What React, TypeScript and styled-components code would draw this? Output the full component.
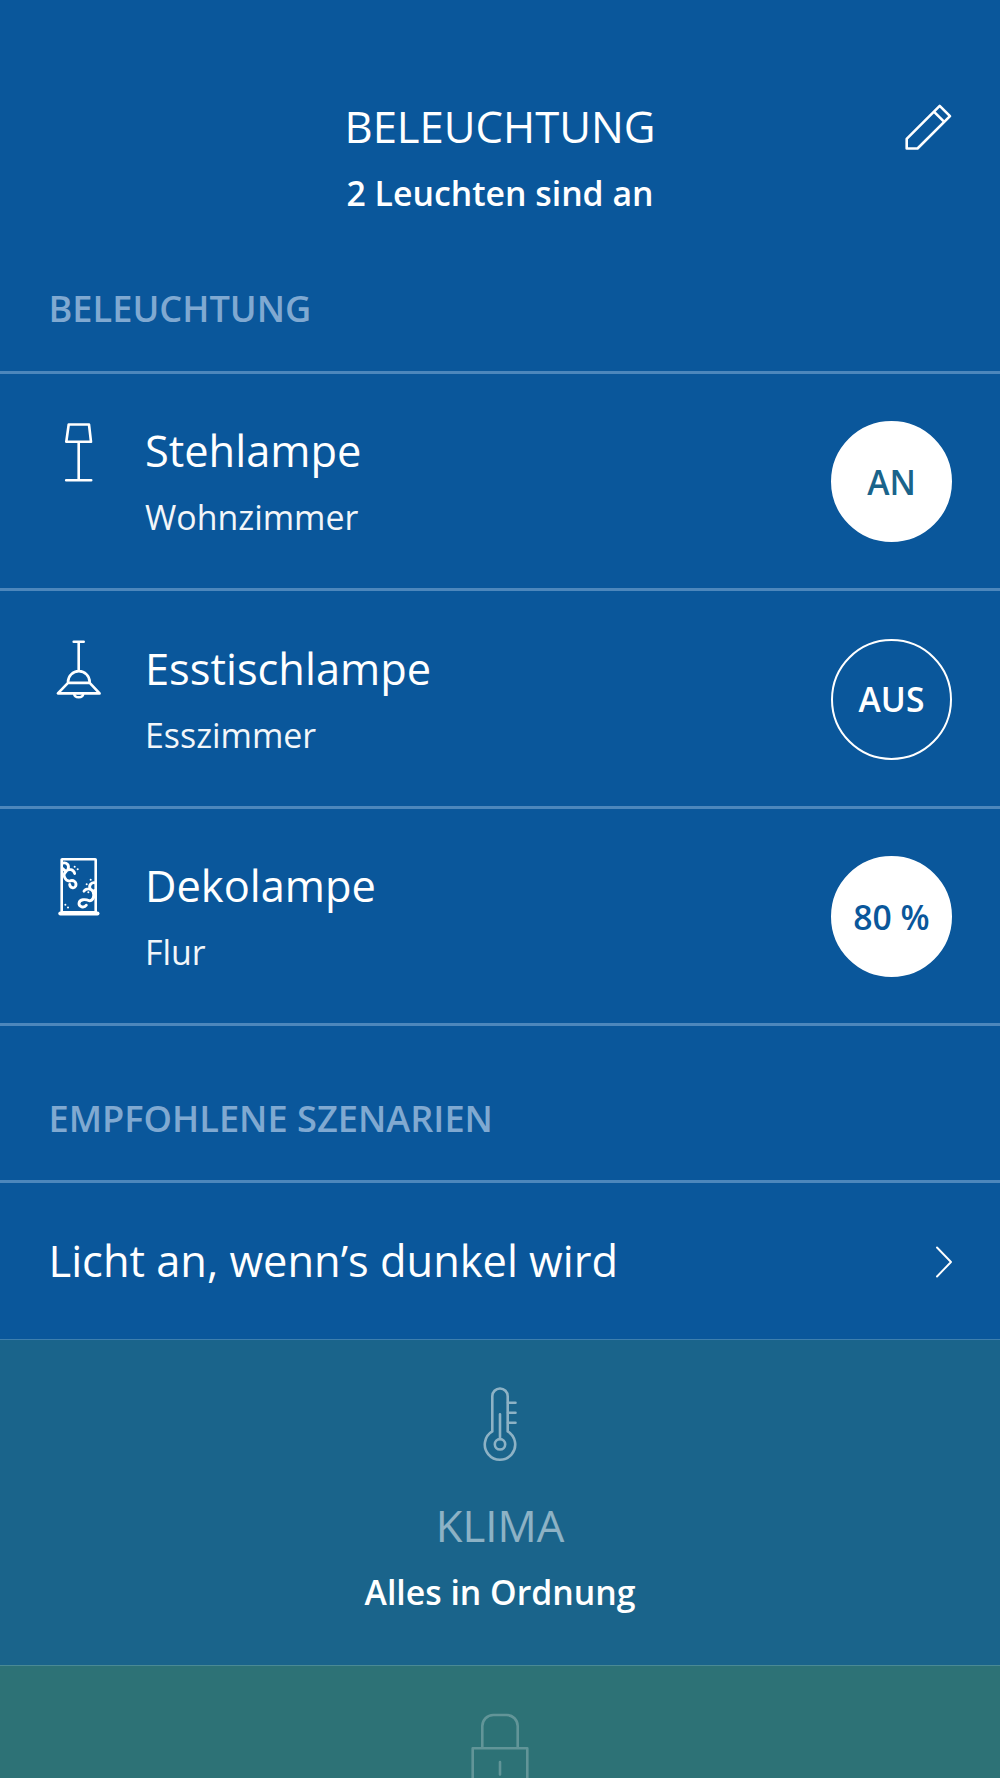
import React from "react";
import styled, { createGlobalStyle } from "styled-components";

const Global = createGlobalStyle`
  * { box-sizing: border-box; }
  body { margin: 0; background: #0a579b; font-family: "Open Sans", sans-serif; color: #fff; }
`;
const Screen = styled.main`
  width: 1000px;
  height: 1778px;
  overflow: hidden;
  display: flex;
  flex-direction: column;
  > * { flex-shrink: 0; }
`;
const Header = styled.header`
  display: grid;
  grid-template-columns: 1fr auto 1fr;
  align-items: start;
  height: 260px;
  padding: 93px 48px 0;
`;
const Heading = styled.div`
  grid-column: 2;
  text-align: center;
`;
const Title = styled.h1<{ $faded?: boolean }>`
  margin: 0;
  font-size: 43.6px;
  line-height: 67px;
  font-weight: 400;
  opacity: ${p => (p.$faded ? 0.5 : 1)};
`;
const Status = styled.p`
  margin: 0;
  font-size: 33.8px;
  line-height: 66px;
  font-weight: 600;
`;
const Edit = styled.span`
  justify-self: end;
  margin-top: 10px;
  display: flex;
`;
const Section = styled.h2<{ $h: number }>`
  margin: 0;
  height: ${p => p.$h}px;
  padding: 0 48.5px 37.5px;
  display: flex;
  align-items: flex-end;
  font-size: 36.2px;
  line-height: 50px;
  font-weight: 600;
  color: #80a9d1;
  border-bottom: 3px solid #4d87bc;
`;
const Row = styled.div`
  height: 217.5px;
  display: flex;
  align-items: flex-start;
  padding: 46px 48px 0 49px;
  border-bottom: 3px solid #4d87bc;
`;
const Icon = styled.span`
  width: 96px;
  display: flex;
`;
const Info = styled.div`
  flex: 1;
  margin-top: -1.5px;
`;
const Name = styled.div`
  font-size: 43.4px;
  line-height: 66px;
`;
const Room = styled.div`
  font-size: 33.9px;
  line-height: 66px;
  opacity: 0.95;
`;
const Toggle = styled.span<{ $on?: boolean; $color?: string }>`
  width: 121px;
  height: 121px;
  margin-top: 1.5px;
  border-radius: 50%;
  border: 2px solid #fff;
  display: flex;
  align-items: center;
  justify-content: center;
  font-size: 33.7px;
  font-weight: 600;
  background: ${p => (p.$on ? "#fff" : "transparent")};
  color: ${p => p.$color ?? "#fff"};
`;
const Scenario = styled.div`
  height: 156px;
  padding: 0 48px 0 48.5px;
  display: flex;
  align-items: center;
  justify-content: space-between;
`;
const Panel = styled.section<{ $bg: string; $line: string; $h: number }>`
  height: ${p => p.$h}px;
  background: ${p => p.$bg};
  border-top: 1px solid ${p => p.$line};
  padding-top: 46px;
  display: flex;
  flex-direction: column;
  align-items: center;
  gap: 30px;
`;
const Glyph = styled.svg<{ $stroke?: number }>`
  display: block;
  flex-shrink: 0;
  fill: none;
  stroke: currentColor;
  stroke-width: ${p => p.$stroke ?? 2.6};
  stroke-linecap: round;
  stroke-linejoin: round;
`;
const FadedGlyph = styled(Glyph)<{ $opacity: number }>`
  opacity: ${p => p.$opacity};
`;
const Base = styled.path`
  stroke-width: 4;
`;
const Swirls = styled.g`
  stroke-width: 8.5;
`;
const Dots = styled.path`
  stroke-width: 6;
`;
const ChevronBox = styled.span`
  display: flex;
  margin-top: 2px;
`;

const Pencil = () => (
  <Glyph width="48" height="50" viewBox="0 0 48 50">
    <path d="M2.7 45.5V35.8L35.7 2.8 46 13.1 13.5 45.5ZM29.9 8.6 40.2 18.9" />
  </Glyph>
);
const FloorLamp = () => (
  <Glyph width="60" height="64" viewBox="0 0 60 64">
    <path d="M19.7 4.5H40L42 21.8H17.3ZM29.7 21.8V60.2M17.2 60.2H42.2" />
  </Glyph>
);
const PendantLamp = () => (
  <Glyph width="60" height="64" viewBox="0 0 60 64">
    <path d="M24.7 4.7H34.7M29.7 4.7V34M19 45.9V45a10.8 10.8 0 0 1 21.7 0V45.9ZM19 45.9 8.9 56.4H50.6L40.7 45.9" />
    <path d="M25.2 57C25.6 61.3 33.8 61.3 34.2 57" />
  </Glyph>
);
const DecoLamp = () => (
  <Glyph width="60" height="64" viewBox="0 0 60 64">
    <rect x="12.7" y="4.2" width="34" height="53" rx="0.5" />
    <Base d="M11.3 58.5H48.5" />
    <Swirls transform="translate(-9 -14.5) scale(.3333)">
      <path d="M68 68C80 65 89 73 84 87M104 99C101 86 86 84 78 92C66 104 76 121 88 122C101 116 111 126 107 137C102 146 90 142 89 132M68 84 78 94" />
      <path d="M166 127C155 124 146 134 150 144M132 152C137 143 153 142 159 153C164 166 160 181 148 181C136 175 119 176 117 188C116 199 132 204 139 194M164 150V170" />
      <Dots d="M104 79h.1M113 86h.1M152 118h.1M140 131h.1M145 155h.1M76 193h.1M84 201h.1" />
    </Swirls>
  </Glyph>
);
const Chevron = () => (
  <Glyph $stroke={1.9} width="17" height="32" viewBox="0 0 17 32">
    <path d="M2 1.5 16 16 2 30.5" />
  </Glyph>
);
const Thermometer = () => (
  <FadedGlyph $opacity={0.5} width="36" height="76" viewBox="0 0 36 76">
    <path d="M10.3 45.4V10.2a7.7 7.7 0 0 1 15.4 0V45.4a15.2 15.2 0 1 1-15.4 0Z" />
    <circle cx="18" cy="58.3" r="5.2" />
    <path d="M18 53V28.2M26 16.8H33.5M26 26.8H33.5M26 36.8H33.5" />
  </FadedGlyph>
);
const Lock = () => (
  <FadedGlyph $opacity={0.25} width="60" height="76" viewBox="0 0 60 76">
    <path d="M12.3 36.2V14a11 11 0 0 1 11-11H36.7a11 11 0 0 1 11 11V36.2M2.7 36.2H57.3V75H2.7ZM30 50V62.5" />
  </FadedGlyph>
);

const lamps = [
  { name: "Stehlampe", room: "Wohnzimmer", state: "AN", on: true, color: "#1a648b", icon: <FloorLamp /> },
  { name: "Esstischlampe", room: "Esszimmer", state: "AUS", on: false, color: "#fff", icon: <PendantLamp /> },
  { name: "Dekolampe", room: "Flur", state: "80 %", on: true, color: "#0a579b", icon: <DecoLamp /> },
];

export default function App() {
  return (
    <Screen>
      <Global />
      <Header>
        <Heading>
          <Title>BELEUCHTUNG</Title>
          <Status>2 Leuchten sind an</Status>
        </Heading>
        <Edit><Pencil /></Edit>
      </Header>
      <Section $h={113.5}>BELEUCHTUNG</Section>
      {lamps.map(l => (
        <Row key={l.name}>
          <Icon>{l.icon}</Icon>
          <Info>
            <Name>{l.name}</Name>
            <Room>{l.room}</Room>
          </Info>
          <Toggle $on={l.on} $color={l.color}>{l.state}</Toggle>
        </Row>
      ))}
      <Section $h={157}>EMPFOHLENE SZENARIEN</Section>
      <Scenario>
        <Name>Licht an, wenn’s dunkel wird</Name>
        <ChevronBox><Chevron /></ChevronBox>
      </Scenario>
      <Panel $h={326} $bg="#1a648b" $line="#3d7fae">
        <Thermometer />
        <Heading>
          <Title $faded>KLIMA</Title>
          <Status>Alles in Ordnung</Status>
        </Heading>
      </Panel>
      <Panel $h={113} $bg="#2d7276" $line="#4a8a94">
        <Lock />
      </Panel>
    </Screen>
  );
}
